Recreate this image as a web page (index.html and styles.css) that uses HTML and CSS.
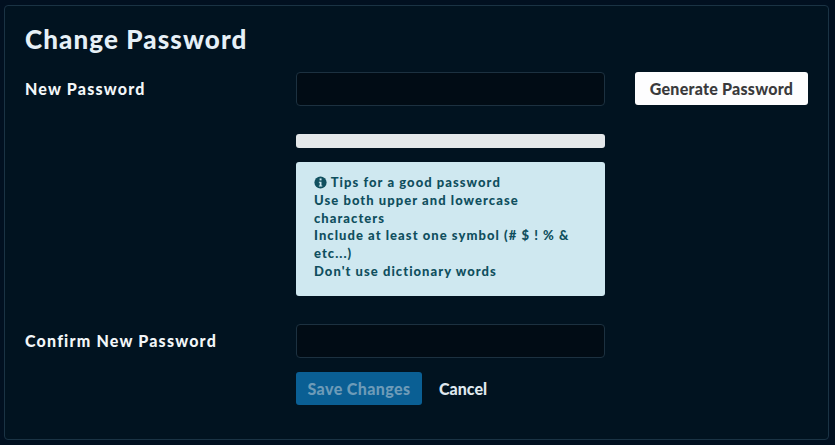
FILE: index.html
```html
<!DOCTYPE html>
<html>
<head>
    <title>Change Password</title>
    <link rel="stylesheet" href="styles.css">
</head>
<body>
    <form class="panel">
        <h2>Change Password</h2>

        <div class="form-row">
            <label for="newPassword">New Password</label>
            <div class="field">
                <input type="password" id="newPassword">
                <div class="strength"></div>
                <div class="tips">
                    <svg class="tips-icon" viewBox="0 0 16 16" width="13" height="13">
                        <circle cx="8" cy="8" r="7.5" fill="#11505f"/>
                        <rect x="6.9" y="3" width="2.4" height="2.4" fill="#cfe8f0"/>
                        <path d="M6 7h3.2v4.600h1v1.400H6v-1.400h1V8.400H6z" fill="#cfe8f0"/>
                    </svg>
                    Tips for a good password<br>
                    Use both upper and lowercase characters<br>
                    Include at least one symbol (# $ ! % &amp; etc...)<br>
                    Don't use dictionary words
                </div>
            </div>
            <button type="button" class="btn-generate">Generate Password</button>
        </div>

        <div class="form-row confirm-row">
            <label for="confirmPassword">Confirm New Password</label>
            <div class="field">
                <input type="password" id="confirmPassword">
                <div class="actions">
                    <button type="button" class="btn-save" disabled>Save Changes</button>
                    <a href="#" class="cancel">Cancel</a>
                </div>
            </div>
        </div>
    </form>
</body>
</html>
```

FILE: styles.css
```css
body {
    margin: 0;
    padding: 5px 6px 5px 4px;
    height: 445px;
    box-sizing: border-box;
    background-color: #011020;
    font-family: Lato, "Open Sans", sans-serif;
    font-weight: 900;
}
.panel {
    height: 100%;
    box-sizing: border-box;
    padding: 16px 20px 0 20px;
    border: 1px solid #1a3344;
    border-radius: 4px;
    background: #011320;
}
h2 {
    margin: 0 0 21px;
    height: 29px;
    font-size: 26px;
    font-weight: 900;
    line-height: 34px;
    letter-spacing: 1.1px;
    color: #e6f0f7;
}
.form-row {
    display: flex;
    align-items: flex-start;
}
.confirm-row {
    margin-top: 28px;
}
label {
    width: 271px;
    flex-shrink: 0;
    font-size: 16px;
    line-height: 34px;
    letter-spacing: 1.2px;
    color: #f2f6f8;
}
.field {
    width: 309px;
    flex-shrink: 0;
}
input {
    display: block;
    width: 100%;
    height: 34px;
    box-sizing: border-box;
    border: 1px solid #1c3140;
    border-radius: 4px;
    background: #010c15;
}
.strength {
    height: 14px;
    margin-top: 28px;
    border-radius: 3px;
    background: #e4e8ea;
}
.tips {
    height: 134px;
    box-sizing: border-box;
    margin-top: 14px;
    padding: 12px 28px 12px 18px;
    border-radius: 3px;
    background: #cfe8f0;
    font-size: 13px;
    line-height: 17.8px;
    letter-spacing: 1.05px;
    color: #0f4f5e;
}
.tips-icon {
    vertical-align: -2px;
}
.btn-generate {
    width: 173px;
    height: 33px;
    margin-left: 30px;
    padding: 0;
    border: none;
    border-radius: 3px;
    background: #fdfdfe;
    font-family: inherit;
    font-weight: 900;
    font-size: 16px;
    letter-spacing: 0.25px;
    color: #3a3a3c;
}
.actions {
    display: flex;
    align-items: center;
    margin-top: 14px;
}
.btn-save {
    width: 126px;
    height: 33px;
    padding: 0;
    border: none;
    border-radius: 3px;
    background: #0a5f94;
    font-family: inherit;
    font-weight: 900;
    font-size: 16px;
    letter-spacing: 0.4px;
    color: #6d9bb8;
}
.cancel {
    margin-left: 17px;
    font-size: 16px;
    color: #dfe8ee;
    text-decoration: none;
}
```
